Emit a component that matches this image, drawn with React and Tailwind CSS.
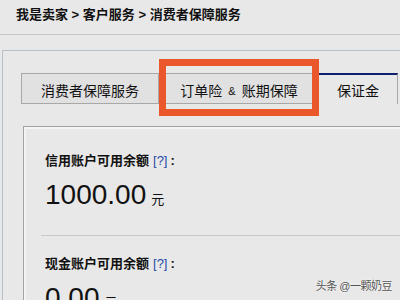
import React from "react";

const FONT = { fontFamily: '"Liberation Sans", "Noto Sans CJK SC", sans-serif' };

function Balance({ label, amount }) {
  return (
    <div className="pl-[4px]">
      <div className="flex items-center text-[13px] leading-[16px] text-[#111]">
        <span className="font-bold">{label}</span>
        <span className="ml-[4px] text-[#1f4aa8]">[?]</span>
        <span className="ml-[3px] font-bold">:</span>
      </div>
      <div className="mt-[10px] flex items-baseline text-[#111]">
        <span className="text-[28px] leading-[32px]">{amount}</span>
        <span className="ml-[5px] text-[13px]">元</span>
      </div>
    </div>
  );
}

export default function App() {
  return (
    <div
      className="relative w-[400px] h-[300px] overflow-hidden bg-[#e8e8e8]"
      style={FONT}
    >
      {/* Breadcrumb */}
      <div className="h-[35px] border-b border-[#c6c6c6] pl-[16px] pt-[7px] text-[13px] leading-[16px] font-semibold text-[#111]">
        我是卖家 &gt; 客户服务 &gt; 消费者保障服务
      </div>

      {/* Outer panel */}
      <div className="mt-[15px] ml-[2px] border-t border-l border-[#b4c0cc] pt-[22px]">
        {/* Tabs */}
        <div className="flex pl-[18px] text-[14px] text-[#111]">
          <div className="w-[138px] h-[31px] border border-[#a8a8a8] bg-[#e1e1e1] flex items-center justify-center pt-[6px]">
            消费者保障服务
          </div>
          <div className="w-[160px] h-[31px] border-y border-[#a8a8a8] bg-[#e1e1e1] flex items-center justify-center pt-[6px]">
            订单险 <span className="mx-[6px] text-[11px]">&amp;</span> 账期保障
          </div>
          <div className="w-[79px] h-[31px] border-t-2 border-t-[#10206e] border-r border-r-[#a8a8a8] flex items-center justify-center pt-[4px]">
            保证金
          </div>
        </div>

        {/* Content panel */}
        <div className="mt-[22px] ml-[20px] h-[200px] border-t border-l border-[#a4a4a4] shadow-[inset_2px_2px_0_#f4f4f4] pl-[17px] pt-[26px]">
          <Balance label="信用账户可用余额" amount="1000.00" />
          <div className="mt-[24px] h-px bg-[#c8c8c8]" />
          <div className="pt-[20px]">
            <Balance label="现金账户可用余额" amount="0.00" />
          </div>
        </div>
      </div>

      {/* Highlight box */}
      <div className="absolute left-[159px] top-[59px] w-[160px] h-[57px] border-[7px] border-[#e9572b]" />

      {/* Watermark */}
      <div className="absolute right-[8px] bottom-[6px] text-[11px] tracking-[-0.5px] text-[#555] [text-shadow:0_0_2px_#fff]">
        头条 @一颗奶豆
      </div>
    </div>
  );
}
